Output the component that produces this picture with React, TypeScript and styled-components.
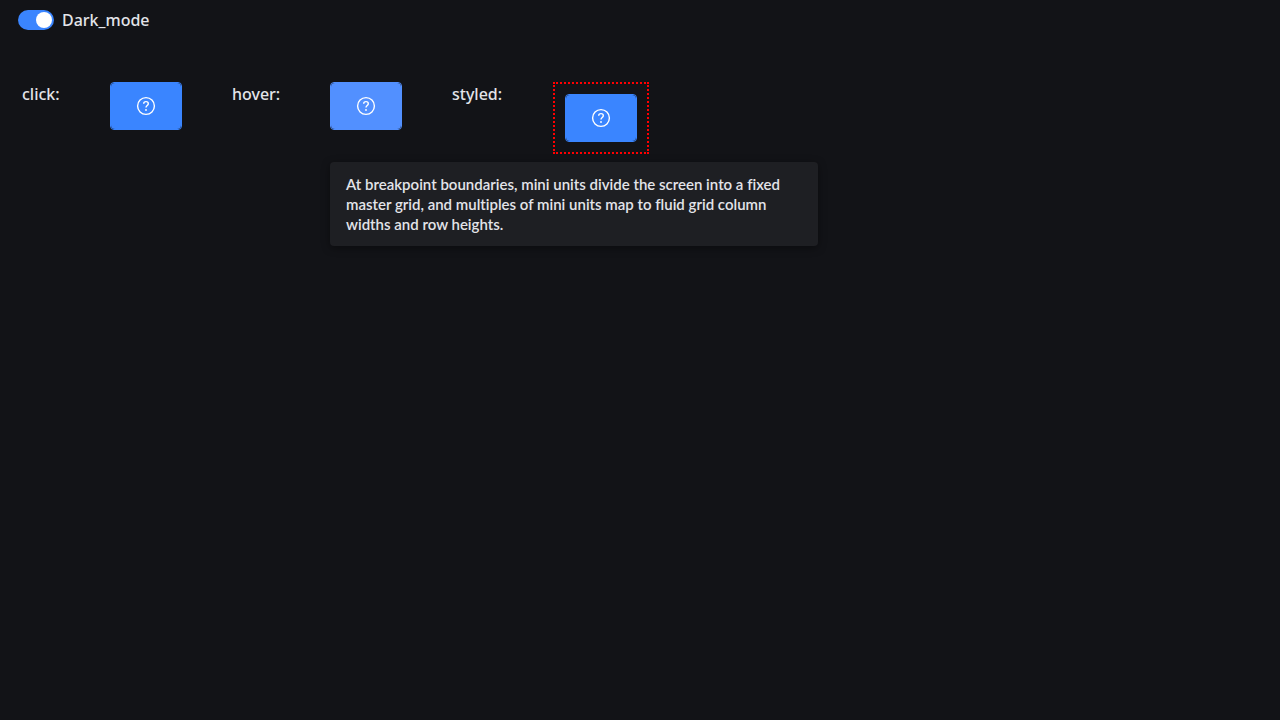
import React, { useId, useState } from 'react';
import styled, { createGlobalStyle } from 'styled-components';

const GlobalStyle = createGlobalStyle`
  * {
    box-sizing: border-box;
  }
  body {
    margin: 0;
    background: #121317;
    color: #e3e4e9;
    font-family: 'Noto Sans', sans-serif;
    font-size: 16px;
    font-weight: 500;
    line-height: 24px;
  }
`;

const Page = styled.main`
  display: flex;
  flex-direction: column;
  gap: 50px;
  min-height: 100vh;
  padding: 8px 18px;
`;

const ToggleLabel = styled.label`
  display: flex;
  align-items: center;
  align-self: flex-start;
  gap: 8px;
  cursor: pointer;
`;

const Switch = styled.input`
  appearance: none;
  display: flex;
  align-items: center;
  justify-content: flex-start;
  width: 36px;
  height: 20px;
  margin: 0;
  padding: 2px;
  border-radius: 10px;
  background: #6b6d76;
  cursor: pointer;

  &::before {
    content: '';
    width: 16px;
    height: 16px;
    border-radius: 50%;
    background: #fff;
  }

  &:checked {
    justify-content: flex-end;
    background: #3a85ff;
  }
`;

const Demos = styled.section`
  display: flex;
  align-items: flex-start;
  gap: 50px;
  padding-left: 4px;
`;

const DemoLabel = styled.span<{ $width: number }>`
  flex: none;
  width: ${(p) => p.$width}px;
  white-space: nowrap;
`;

const Anchor = styled.div<{ $outlined?: boolean }>`
  position: relative;
  flex: none;
  ${(p) => p.$outlined && 'padding: 10px; border: 2px dotted #f00;'}
`;

const HelpButton = styled.button<{ $active?: boolean }>`
  display: flex;
  width: 72px;
  height: 48px;
  padding: 0;
  border: 1px solid ${(p) => (p.$active ? '#5290ff' : '#3a85ff')};
  border-radius: 4px;
  background: #121317;
  color: #fff;
  cursor: pointer;
`;

const ButtonFace = styled.span<{ $active?: boolean }>`
  display: flex;
  flex: 1;
  align-items: center;
  justify-content: center;
  border-radius: 4px;
  background: ${(p) => (p.$active ? '#5290ff' : '#3a85ff')};
`;

const Tooltip = styled.div`
  position: absolute;
  top: calc(100% + 32px);
  left: 0;
  z-index: 1;
  width: 488px;
  padding: 12px 16px;
  border-radius: 4px;
  background: #1e1f23;
  box-shadow: 0 2px 8px rgba(0, 0, 0, 0.4);
  font-family: Lato, sans-serif;
  font-size: 15px;
  font-weight: 600;
  font-variant-ligatures: none;
  line-height: 20px;
`;

function HelpIcon() {
  return (
    <svg width="20" height="20" viewBox="0 0 20 20" fill="none" stroke="currentColor" strokeWidth="1.4" aria-hidden="true">
      <circle cx="10" cy="10" r="8.4" />
      <path d="M7.7 7.7C7.7 6.4 8.6 5.6 10 5.6s2.3.8 2.3 2.1c0 1.7-2.3 2-2.3 3.9" />
      <circle cx="10" cy="14" r="0.9" fill="currentColor" stroke="none" />
    </svg>
  );
}

interface DemoProps {
  label: string;
  labelWidth: number;
  active?: boolean;
  outlined?: boolean;
  tip?: string;
}

function Demo({ label, labelWidth, active, outlined, tip }: DemoProps) {
  const tipId = useId();
  return (
    <>
      <DemoLabel $width={labelWidth}>{label}</DemoLabel>
      <Anchor $outlined={outlined}>
        <HelpButton $active={active} aria-label="Help" aria-describedby={tip ? tipId : undefined}>
          <ButtonFace $active={active}>
            <HelpIcon />
          </ButtonFace>
        </HelpButton>
        {tip && (
          <Tooltip id={tipId} role="tooltip">
            {tip}
          </Tooltip>
        )}
      </Anchor>
    </>
  );
}

export default function App() {
  const [dark, setDark] = useState(true);
  return (
    <>
      <GlobalStyle />
      <Page>
        <ToggleLabel>
          <Switch type="checkbox" checked={dark} onChange={(e) => setDark(e.target.checked)} />
          Dark_mode
        </ToggleLabel>
        <Demos>
          <Demo label="click:" labelWidth={38} />
          <Demo
            label="hover:"
            labelWidth={48}
            active
            tip="At breakpoint boundaries, mini units divide the screen into a fixed master grid, and multiples of mini units map to fluid grid column widths and row heights."
          />
          <Demo label="styled:" labelWidth={51} outlined />
        </Demos>
      </Page>
    </>
  );
}
